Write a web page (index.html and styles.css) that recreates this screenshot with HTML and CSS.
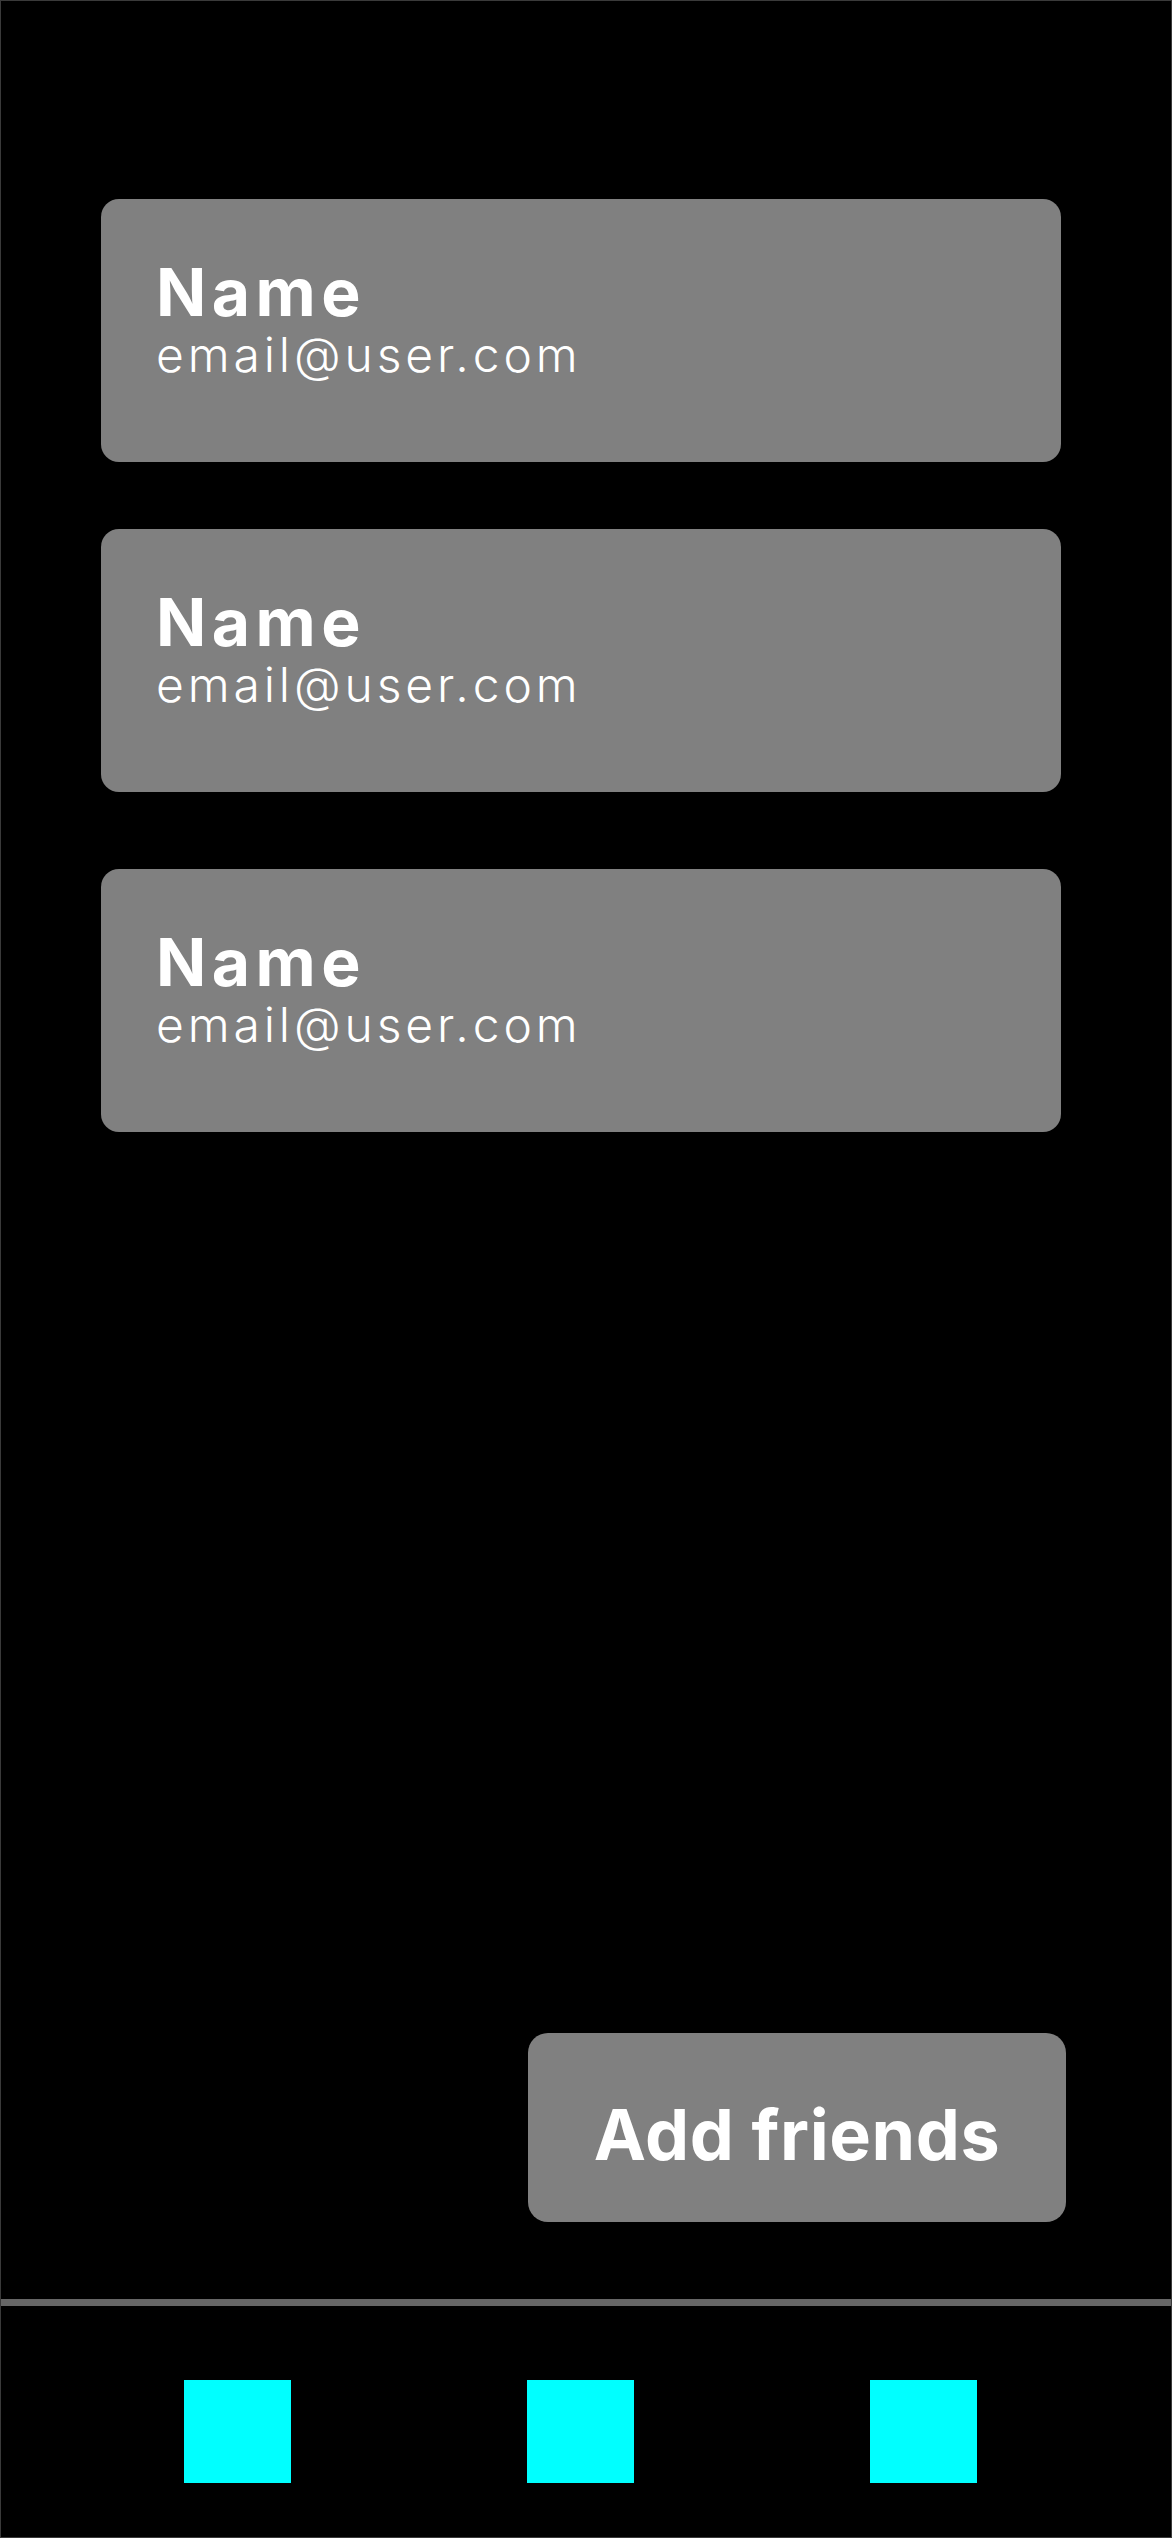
FILE: index.html
```html
<!DOCTYPE html>
<html lang="en">
<head>
<meta charset="utf-8">
<title>Friends</title>
<link rel="stylesheet" href="styles.css">
</head>
<body>
<div class="screen">
  <main class="content">
    <ul class="friend-list">
      <li class="friend-card">
        <div class="friend-name">Name</div>
        <div class="friend-email">email@user.com</div>
      </li>
      <li class="friend-card">
        <div class="friend-name">Name</div>
        <div class="friend-email">email@user.com</div>
      </li>
      <li class="friend-card friend-card-last">
        <div class="friend-name">Name</div>
        <div class="friend-email">email@user.com</div>
      </li>
    </ul>
    <div class="actions">
      <button class="add-button" type="button">Add friends</button>
    </div>
  </main>
  <nav class="tab-bar">
    <span class="tab-icon"></span>
    <span class="tab-icon"></span>
    <span class="tab-icon"></span>
  </nav>
</div>
</body>
</html>
```

FILE: styles.css
```css
* {
  box-sizing: border-box;
}

html, body {
  margin: 0;
  padding: 0;
  background: #000;
}

body {
  font-family: Inter, "Liberation Sans", sans-serif;
  color: #fff;
}

.screen {
  width: 1172px;
  height: 2538px;
  border: 1px solid #3a3a3a;
  display: flex;
  flex-direction: column;
  background: #000;
}

.content {
  flex: 1;
  display: flex;
  flex-direction: column;
  padding: 198px 0 0 100px;
}

.friend-list {
  list-style: none;
  margin: 0;
  padding: 0;
  width: 960px;
  display: flex;
  flex-direction: column;
  gap: 67px;
}

.friend-card {
  height: 263px;
  background: #808080;
  border-radius: 18px;
  padding: 60px 0 0 55px;
}

.friend-card-last {
  margin-top: 10px;
}

.friend-name {
  font-size: 66px;
  line-height: 66px;
  font-weight: 700;
  letter-spacing: 5.5px;
}

.friend-email {
  margin-top: 6px;
  font-size: 48px;
  line-height: 48px;
  font-weight: 300;
  letter-spacing: 3.9px;
}

.actions {
  margin-top: auto;
  display: flex;
  justify-content: flex-end;
  padding-right: 105px;
  margin-bottom: 77px;
}

.add-button {
  width: 538px;
  height: 189px;
  background: #808080;
  border: none;
  border-radius: 20px;
  color: #fff;
  font-family: Inter, "Liberation Sans", sans-serif;
  font-size: 70px;
  line-height: 70px;
  font-weight: 700;
  letter-spacing: 0.6px;
  padding: 14px 0 0 0;
  display: flex;
  align-items: center;
  justify-content: center;
}

.tab-bar {
  height: 238px;
  border-top: 7px solid #666;
  display: flex;
  align-items: flex-start;
  padding: 74px 0 0 183px;
  gap: 236px;
}

.tab-icon {
  display: block;
  width: 107px;
  height: 103px;
  background: #00ffff;
}
```
